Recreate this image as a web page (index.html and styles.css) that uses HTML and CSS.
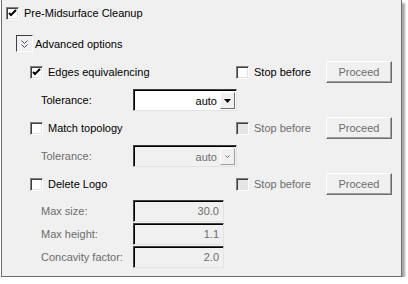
FILE: index.html
```html
<!DOCTYPE html>
<html lang="en">
<head>
    <meta charset="UTF-8">
    <title>Pre-Midsurface Cleanup</title>
    <link rel="stylesheet" href="styles.css">
</head>
<body>
    <div class="panel">
        <div class="head">
            <span class="check checked">
                <svg width="9" height="9" viewBox="0 0 9 9"><path d="M1 4 L3 6 L8 1" fill="none" stroke="#000" stroke-width="2"/></svg>
            </span>
            <span class="text">Pre-Midsurface Cleanup</span>
        </div>

        <div class="adv">
            <span class="toggle">
                <svg width="7" height="8" viewBox="0 0 7 8"><path d="M0.5 0.5 L3.5 3.5 L6.5 0.5 M0.5 4.5 L3.5 7.5 L6.5 4.5" fill="none" stroke="#4b4b6e" stroke-width="1"/></svg>
            </span>
            <span class="text">Advanced options</span>
        </div>

        <!-- edges equivalencing -->
        <div class="opt">
            <div class="opt-main">
                <span class="check checked">
                    <svg width="9" height="9" viewBox="0 0 9 9"><path d="M1 4 L3 6 L8 1" fill="none" stroke="#000" stroke-width="2"/></svg>
                </span>
                <span class="text">Edges equivalencing</span>
            </div>
            <div class="stop">
                <span class="check"></span>
                <span class="text">Stop before</span>
            </div>
            <button class="btn">Proceed</button>
        </div>
        <div class="param">
            <span class="param-label">Tolerance:</span>
            <div class="combo">
                <span class="combo-value">auto</span>
                <span class="combo-arrow">
                    <svg width="7" height="4" viewBox="0 0 7 4"><path d="M0 0 H7 L3.5 4 Z" fill="#000"/></svg>
                </span>
            </div>
        </div>

        <!-- match topology -->
        <div class="opt">
            <div class="opt-main">
                <span class="check"></span>
                <span class="text">Match topology</span>
            </div>
            <div class="stop disabled">
                <span class="check"></span>
                <span class="text">Stop before</span>
            </div>
            <button class="btn">Proceed</button>
        </div>
        <div class="param disabled">
            <span class="param-label">Tolerance:</span>
            <div class="combo">
                <span class="combo-value">auto</span>
                <span class="combo-arrow">
                    <svg width="5" height="3" viewBox="0 0 5 3"><path d="M0.5 0.5 L2.5 2.5 L4.5 0.5" fill="none" stroke="#6d6d6d" stroke-width="1"/></svg>
                </span>
            </div>
        </div>

        <!-- delete logo -->
        <div class="opt">
            <div class="opt-main">
                <span class="check"></span>
                <span class="text">Delete Logo</span>
            </div>
            <div class="stop disabled">
                <span class="check"></span>
                <span class="text">Stop before</span>
            </div>
            <button class="btn">Proceed</button>
        </div>
        <div class="fields">
            <div class="field">
                <span class="param-label">Max size:</span>
                <span class="field-box">30.0</span>
            </div>
            <div class="field">
                <span class="param-label">Max height:</span>
                <span class="field-box">1.1</span>
            </div>
            <div class="field">
                <span class="param-label">Concavity factor:</span>
                <span class="field-box">2.0</span>
            </div>
        </div>
    </div>
</body>
</html>
```

FILE: styles.css
```css
* {
    margin: 0;
    padding: 0;
    box-sizing: border-box;
}

body {
    background: #fff;
    font-family: 'Liberation Sans', Arial, sans-serif;
    font-size: 11px;
    color: #000;
}

.panel {
    margin-left: 1px;
    width: 401px;
    height: 277px;
    background: #f0f0f0;
    border: 1px solid #6e6e6e;
    border-top: none;
    box-shadow: 3px 3px 2px rgba(0, 0, 0, 0.35);
}

.check {
    width: 13px;
    height: 13px;
    flex: none;
    display: flex;
    align-items: center;
    justify-content: center;
    background: #fff;
    border: 1px solid;
    border-color: #808080 #fff #fff #808080;
    box-shadow: inset 1px 1px 0 #404040, inset -1px -1px 0 #e3e3e3;
}

.text {
    margin-left: 5px;
    white-space: nowrap;
}

.head {
    height: 26px;
    padding-left: 4px;
    display: flex;
    align-items: center;
}

.adv {
    margin-top: 9px;
    height: 17px;
    padding-left: 14px;
    display: flex;
    align-items: center;
}

.adv .text {
    margin-left: 2px;
}

.toggle {
    width: 17px;
    height: 17px;
    display: flex;
    align-items: center;
    justify-content: center;
    border: 1px solid;
    border-color: #404040 #fff #fff #404040;
    background: #f0f0f0;
}

.opt {
    margin-top: 6px;
    height: 22px;
    padding-left: 28px;
    display: grid;
    grid-template-columns: 206px 90px 66px;
    align-items: center;
}

.adv + .opt {
    margin-top: 9px;
}

.opt-main,
.stop {
    display: flex;
    align-items: center;
}

.disabled {
    color: #6d6d6d;
}

.disabled .check {
    background: #e6e6e6;
}

.btn {
    height: 22px;
    font-family: inherit;
    font-size: 11px;
    color: #6d6d6d;
    background: #f0f0f0;
    border: 1px solid;
    border-color: #fff #6e6e6e #6e6e6e #fff;
    box-shadow: inset -1px -1px 0 #a0a0a0;
}

.param {
    margin-top: 6px;
    height: 22px;
    padding-left: 39px;
    display: flex;
    align-items: center;
}

.param-label {
    width: 92px;
    flex: none;
    white-space: nowrap;
}

.combo {
    width: 104px;
    height: 22px;
    display: flex;
    align-items: center;
    background: #fff;
    border: 1px solid;
    border-color: #404040 #e3e3e3 #e3e3e3 #404040;
    box-shadow: inset 1px 1px 0 #000;
    padding: 2px 1px 1px 2px;
}

.combo-value {
    flex: 1;
    text-align: right;
    padding-right: 3px;
}

.combo-arrow {
    width: 15px;
    height: 100%;
    display: flex;
    align-items: center;
    justify-content: center;
    background: #f0f0f0;
    border: 1px solid;
    border-color: #fff #6e6e6e #6e6e6e #fff;
}

.param.disabled .combo {
    background: #f0f0f0;
}

.param.disabled .combo-arrow {
    border-color: #fff #a0a0a0 #a0a0a0 #fff;
}

.fields {
    margin-top: 5px;
    padding-left: 39px;
    display: flex;
    flex-direction: column;
    gap: 1px;
    color: #6d6d6d;
}

.field {
    height: 22px;
    display: flex;
    align-items: center;
}

.field-box {
    width: 91px;
    height: 22px;
    padding: 0 4px;
    display: flex;
    align-items: center;
    justify-content: flex-end;
    background: #f0f0f0;
    border: 1px solid;
    border-color: #404040 #e3e3e3 #e3e3e3 #404040;
    box-shadow: inset 1px 1px 0 #000;
}
```
